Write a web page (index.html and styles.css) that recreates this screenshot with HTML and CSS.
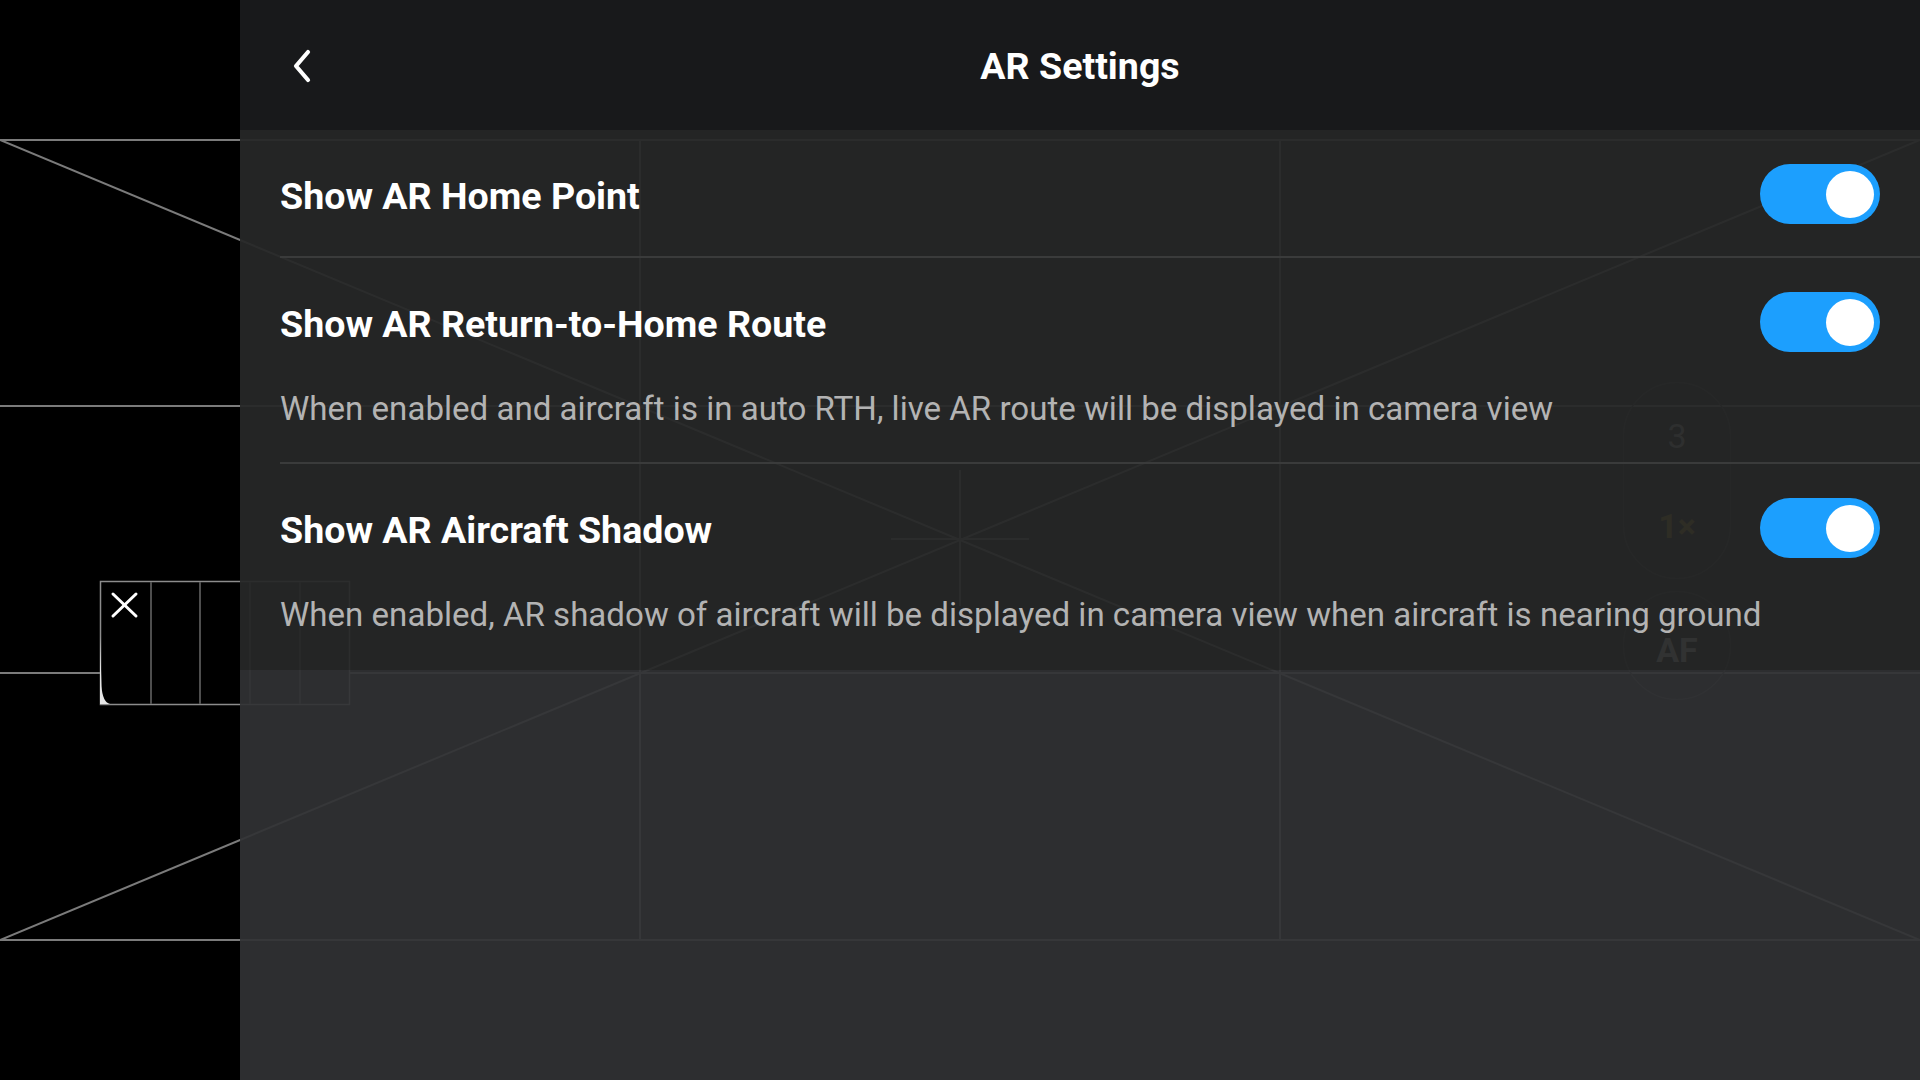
FILE: index.html
```html
<!DOCTYPE html>
<html lang="en">
<head>
<meta charset="utf-8">
<title>AR Settings</title>
<link rel="stylesheet" href="styles.css">
</head>
<body>
<svg class="camera" width="1920" height="1080" viewBox="0 0 1920 1080" aria-hidden="true">
  <g class="grid">
    <line x1="0" y1="140" x2="1920" y2="140"/>
    <line x1="0" y1="406" x2="1920" y2="406"/>
    <line x1="0" y1="673" x2="1920" y2="673"/>
    <line x1="0" y1="940" x2="1920" y2="940"/>
    <line x1="640" y1="140" x2="640" y2="940"/>
    <line x1="1280" y1="140" x2="1280" y2="940"/>
    <line x1="0" y1="140" x2="1920" y2="940"/>
    <line x1="0" y1="940" x2="1920" y2="140"/>
    <line x1="891" y1="539" x2="1029" y2="539"/>
    <line x1="960" y1="470" x2="960" y2="606"/>
  </g>
  <g class="histo">
    <rect x="100.5" y="581.5" width="249" height="123" class="histo-box"/>
    <line x1="151" y1="582" x2="151" y2="704" class="histo-cell"/>
    <line x1="200" y1="582" x2="200" y2="704" class="histo-cell"/>
    <line x1="250" y1="582" x2="250" y2="704" class="histo-cell"/>
    <line x1="300" y1="582" x2="300" y2="704" class="histo-cell"/>
    <path d="M100 636 L101.5 686 Q102.5 702 110 704 L100 704 Z" class="histo-curve"/>
    <line x1="113" y1="594" x2="136" y2="616" class="histo-x"/>
    <line x1="136" y1="594" x2="113" y2="616" class="histo-x"/>
  </g>
  <g class="zoomctl">
    <rect x="1623.5" y="382.5" width="107" height="196" rx="53.5"/>
    <rect x="1623.5" y="591.5" width="107" height="108" rx="53.5"/>
    <text x="1677" y="448" class="z-num">3</text>
    <text x="1677" y="538" class="z-one">1×</text>
    <text x="1677" y="662" class="z-af">AF</text>
  </g>
</svg>

<div class="app">
  <div class="side"></div>
  <section class="panel">
    <header class="topbar">
      <div class="topbar-left">
        <span class="back">
          <svg width="24" height="36" viewBox="0 0 24 36"><path d="M17 4 L5 18 L17 32" fill="none" stroke="#fff" stroke-width="4.2" stroke-linecap="round" stroke-linejoin="round"/></svg>
        </span>
      </div>
      <h1 class="title">AR Settings</h1>
      <div class="topbar-right"></div>
    </header>

    <div class="list">
      <div class="row">
        <div class="row-head">
          <span class="row-title">Show AR Home Point</span>
          <span class="switch"><span class="knob"></span></span>
        </div>
      </div>
      <div class="row">
        <div class="row-head">
          <span class="row-title">Show AR Return-to-Home Route</span>
          <span class="switch"><span class="knob"></span></span>
        </div>
        <p class="row-desc">When enabled and aircraft is in auto RTH, live AR route will be displayed in camera view</p>
      </div>
      <div class="row last">
        <div class="row-head">
          <span class="row-title">Show AR Aircraft Shadow</span>
          <span class="switch"><span class="knob"></span></span>
        </div>
        <p class="row-desc">When enabled, AR shadow of aircraft will be displayed in camera view when aircraft is nearing ground</p>
      </div>
    </div>
    <div class="rest"></div>
  </section>
</div>
</body>
</html>
```

FILE: styles.css
```css
* { box-sizing: border-box; }

html, body {
  margin: 0;
  padding: 0;
  width: 1920px;
  height: 1080px;
  overflow: hidden;
  background: #000;
  font-family: Roboto, "Noto Sans", "Liberation Sans", sans-serif;
}

body { position: relative; }

.camera {
  position: absolute;
  left: 0;
  top: 0;
  z-index: 0;
}

.grid line {
  stroke: #7b7b7b;
  stroke-width: 2;
}

.histo-box {
  fill: #000;
  stroke: #8c8c8c;
  stroke-width: 1.5;
}
.histo-cell {
  stroke: #4e4e4e;
  stroke-width: 2;
}
.histo-curve { fill: #e6e6e6; }
.histo-x {
  stroke: #fff;
  stroke-width: 3;
  stroke-linecap: round;
}

.zoomctl rect {
  fill: none;
  stroke: #2e2e2e;
  stroke-width: 1.5;
}
.zoomctl text {
  text-anchor: middle;
  font-family: Roboto, "Liberation Sans", sans-serif;
  font-size: 34px;
}
.z-num { fill: #a0a0a0; }
.z-one { fill: #a08000; font-weight: 700; }
.z-af { fill: #d8d8d8; font-weight: 700; font-size: 36px; }

.app {
  position: relative;
  z-index: 1;
  display: flex;
  width: 1920px;
  height: 1080px;
}

.side {
  width: 240px;
  flex: none;
}

.panel {
  flex: 1;
  display: flex;
  flex-direction: column;
}

.topbar {
  height: 130px;
  flex: none;
  background: #18191b;
  display: grid;
  grid-template-columns: 1fr auto 1fr;
  align-items: center;
  padding-top: 4px;
}

.topbar-left {
  padding-left: 51px;
  display: flex;
  align-items: center;
  margin-top: -3px;
}

.back {
  display: flex;
  width: 24px;
  height: 36px;
}

.title {
  margin: 0;
  color: #fff;
  font-size: 37.6px;
  font-weight: 700;
  line-height: 1;
}

.list {
  background: rgba(38, 39, 39, 0.94);
}

.row {
  margin-left: 40px;
  padding: 34px 40px 31px 0;
  border-bottom: 2px solid #3a3b3b;
}

.row.last {
  border-bottom: none;
  padding-bottom: 33px;
}

.row:first-child { padding-bottom: 32px; }

.row-head {
  height: 60px;
  display: flex;
  align-items: center;
  justify-content: space-between;
}

.row-title {
  color: #fff;
  font-size: 37.6px;
  font-weight: 700;
  line-height: 1;
  padding-top: 5px;
}

.row-desc {
  margin: 35px 0 0 0;
  color: #b3b3b3;
  font-size: 33.1px;
  line-height: 44px;
  font-weight: 400;
  white-space: nowrap;
}

.switch {
  width: 120px;
  height: 60px;
  border-radius: 30px;
  background: #1c9ffe;
  display: flex;
  align-items: center;
  justify-content: flex-end;
  padding-right: 6px;
  flex: none;
}

.knob {
  width: 48px;
  height: 47px;
  border-radius: 50%;
  background: #fff;
}

.rest {
  flex: 1;
  background: rgba(48, 49, 52, 0.93);
}
```
